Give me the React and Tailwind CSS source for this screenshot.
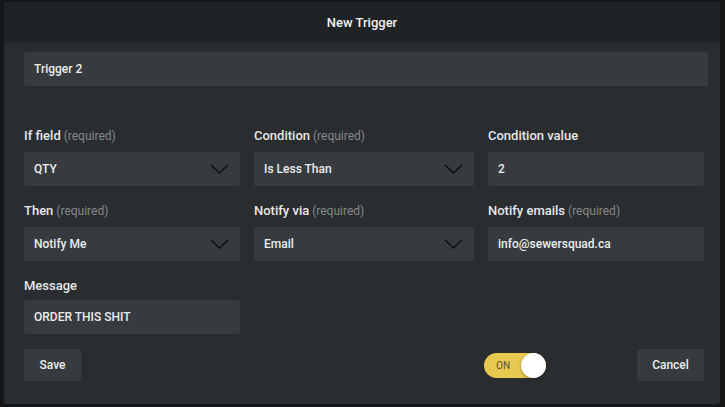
import React from "react";

const Chevron = () => (
  <svg width="19" height="10" viewBox="0 0 19 10" fill="none" className="shrink-0">
    <path d="M1 1 L9.5 9 L18 1" stroke="#0d0f10" strokeWidth="1.5" />
  </svg>
);

const Label = ({ children, req }) => (
  <div className="h-[16px] leading-[16px] pt-[1px] text-[13px] font-medium text-[#e6e7e8] whitespace-nowrap">
    {children}
    {req && <span className="font-normal text-[12px] text-[#85888b]"> (required)</span>}
  </div>
);

const Select = ({ value }) => (
  <div className="mt-[9px] h-[34px] rounded-[2px] bg-[#373a3e] flex items-center justify-between pl-[10px] pr-[11px] text-[12px] font-medium text-[#eceded]">
    <span>{value}</span>
    <Chevron />
  </div>
);

const Input = ({ value }) => (
  <div className="mt-[9px] h-[34px] rounded-[2px] bg-[#373a3e] flex items-center pl-[10px] text-[12px] font-medium text-[#eceded]">
    {value}
  </div>
);

export default function App() {
  return (
    <div
      className="w-[725px] h-[407px] bg-[#141617] pt-[2px] pl-[4px] pr-[5px] pb-[3px]"
      style={{ fontFamily: "Roboto, 'Liberation Sans', sans-serif" }}
    >
      <div className="h-full w-full rounded-[3px] overflow-hidden bg-[#2a2d30] flex flex-col">
        <div className="h-[41px] bg-[#1f2326] flex items-center justify-center text-[13px] font-medium text-[#f0f0f0]">
          New Trigger
        </div>
        <div className="pl-[20px] pr-[12px] pt-[9px]">
          <div className="h-[34px] rounded-[2px] bg-[#373a3e] flex items-center pl-[10px] text-[12px] font-medium text-[#eceded]">
            Trigger 2
          </div>
          <div className="mt-[41px] grid grid-cols-[216px_220px_216px] gap-x-[14px]">
            <div>
              <Label req>If field</Label>
              <Select value="QTY" />
            </div>
            <div>
              <Label req>Condition</Label>
              <Select value="Is Less Than" />
            </div>
            <div>
              <Label>Condition value</Label>
              <Input value="2" />
            </div>
          </div>
          <div className="mt-[16px] grid grid-cols-[216px_220px_216px] gap-x-[14px]">
            <div>
              <Label req>Then</Label>
              <Select value="Notify Me" />
            </div>
            <div>
              <Label req>Notify via</Label>
              <Select value="Email" />
            </div>
            <div>
              <Label req>Notify emails</Label>
              <Input value="info@sewersquad.ca" />
            </div>
          </div>
          <div className="mt-[16px] w-[216px]">
            <Label>Message</Label>
            <div className="mt-[7px] h-[34px] rounded-[2px] bg-[#373a3e] flex items-center pl-[10px] text-[12px] font-medium text-[#eceded]">
              ORDER THIS SHIT
            </div>
          </div>
          <div className="mt-[15px] flex items-center w-[680px]">
            <div className="h-[32px] w-[57px] rounded-[2px] bg-[#373a3e] flex items-center justify-center text-[12px] font-medium text-[#eceded]">
              Save
            </div>
            <div className="ml-[403px] h-[25px] w-[62px] rounded-full bg-[#e9c84f] flex items-center justify-between pl-[12px]">
              <span className="text-[10px] text-[#5a5240]">ON</span>
              <div className="h-[25px] w-[25px] rounded-full bg-white shadow-[0_1px_3px_rgba(0,0,0,0.35)]" />
            </div>
            <div className="ml-auto h-[32px] w-[67px] rounded-[2px] bg-[#373a3e] flex items-center justify-center text-[12px] font-medium text-[#eceded]">
              Cancel
            </div>
          </div>
        </div>
      </div>
    </div>
  );
}
